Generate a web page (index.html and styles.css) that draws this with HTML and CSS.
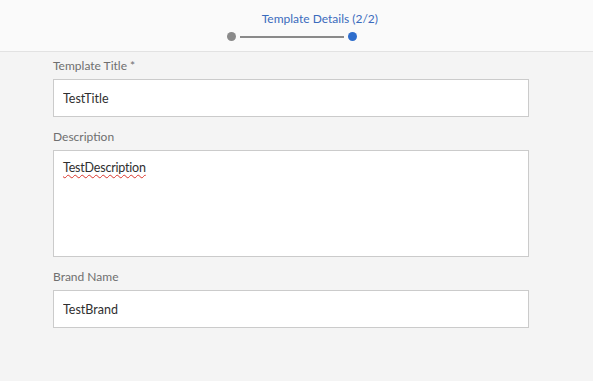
FILE: index.html
```html
<!DOCTYPE html>
<html lang="en">
<head>
<meta charset="utf-8">
<title>Template Details</title>
<link rel="stylesheet" href="styles.css">
</head>
<body>
<header class="header">
  <div class="stepper">
    <div class="step-title">Template Details (2/2)</div>
    <div class="step-track">
      <span class="dot dot-done"></span>
      <span class="track-line"></span>
      <span class="dot dot-active"></span>
    </div>
  </div>
</header>
<main class="form">
  <div class="field">
    <label class="label" for="title">Template Title *</label>
    <input class="input" id="title" type="text" value="TestTitle">
  </div>
  <div class="field">
    <label class="label" for="desc">Description</label>
    <textarea class="input textarea" id="desc">TestDescription</textarea>
  </div>
  <div class="field">
    <label class="label" for="brand">Brand Name</label>
    <input class="input" id="brand" type="text" value="TestBrand">
  </div>
</main>
</body>
</html>
```
FILE: styles.css
```css
html, body {
  margin: 0;
  padding: 0;
}
body {
  background: #f4f4f4;
  font-family: Lato, "Open Sans", sans-serif;
  width: 593px;
  height: 381px;
  overflow: hidden;
}
.header {
  height: 51px;
  background: #fafafa;
  border-bottom: 1px solid #e2e2e2;
  display: flex;
  box-sizing: content-box;
}
.stepper {
  margin-left: 227px;
  padding-top: 11px;
  display: flex;
  flex-direction: column;
  align-items: flex-end;
  width: 151px;
}
.step-title {
  font-size: 12px;
  line-height: 16px;
  color: #3a6bbd;
  white-space: nowrap;
}
.step-track {
  align-self: flex-start;
  display: flex;
  align-items: center;
  gap: 4px;
  margin-top: 5px;
}
.dot {
  width: 9px;
  height: 9px;
  border-radius: 50%;
  display: block;
}
.dot-done { background: #8a8a8a; }
.dot-active { background: #2e6dcc; }
.track-line {
  display: block;
  width: 104px;
  height: 2px;
  background: #8a8a8a;
}
.form {
  padding: 6px 0 0 53px;
  display: flex;
  flex-direction: column;
  gap: 12px;
  width: 476px;
}
.field {
  display: flex;
  flex-direction: column;
}
.label {
  font-size: 12px;
  line-height: 16px;
  color: #6f6f6f;
  margin-bottom: 5px;
}
.input {
  box-sizing: border-box;
  width: 476px;
  height: 38px;
  margin: 0;
  border: 1px solid #cbcbcb;
  border-radius: 0;
  background: #ffffff;
  padding: 0 9px;
  font-family: Lato, "Open Sans", sans-serif;
  font-size: 12.5px;
  color: #2f2f2f;
  outline: none;
}
.textarea {
  height: 107px;
  padding: 8px 9px;
  line-height: 18px;
  resize: none;
  letter-spacing: -0.2px;
  text-decoration: underline wavy #d9352b;
  text-decoration-thickness: 1px;
  text-underline-offset: 2px;
}
```
